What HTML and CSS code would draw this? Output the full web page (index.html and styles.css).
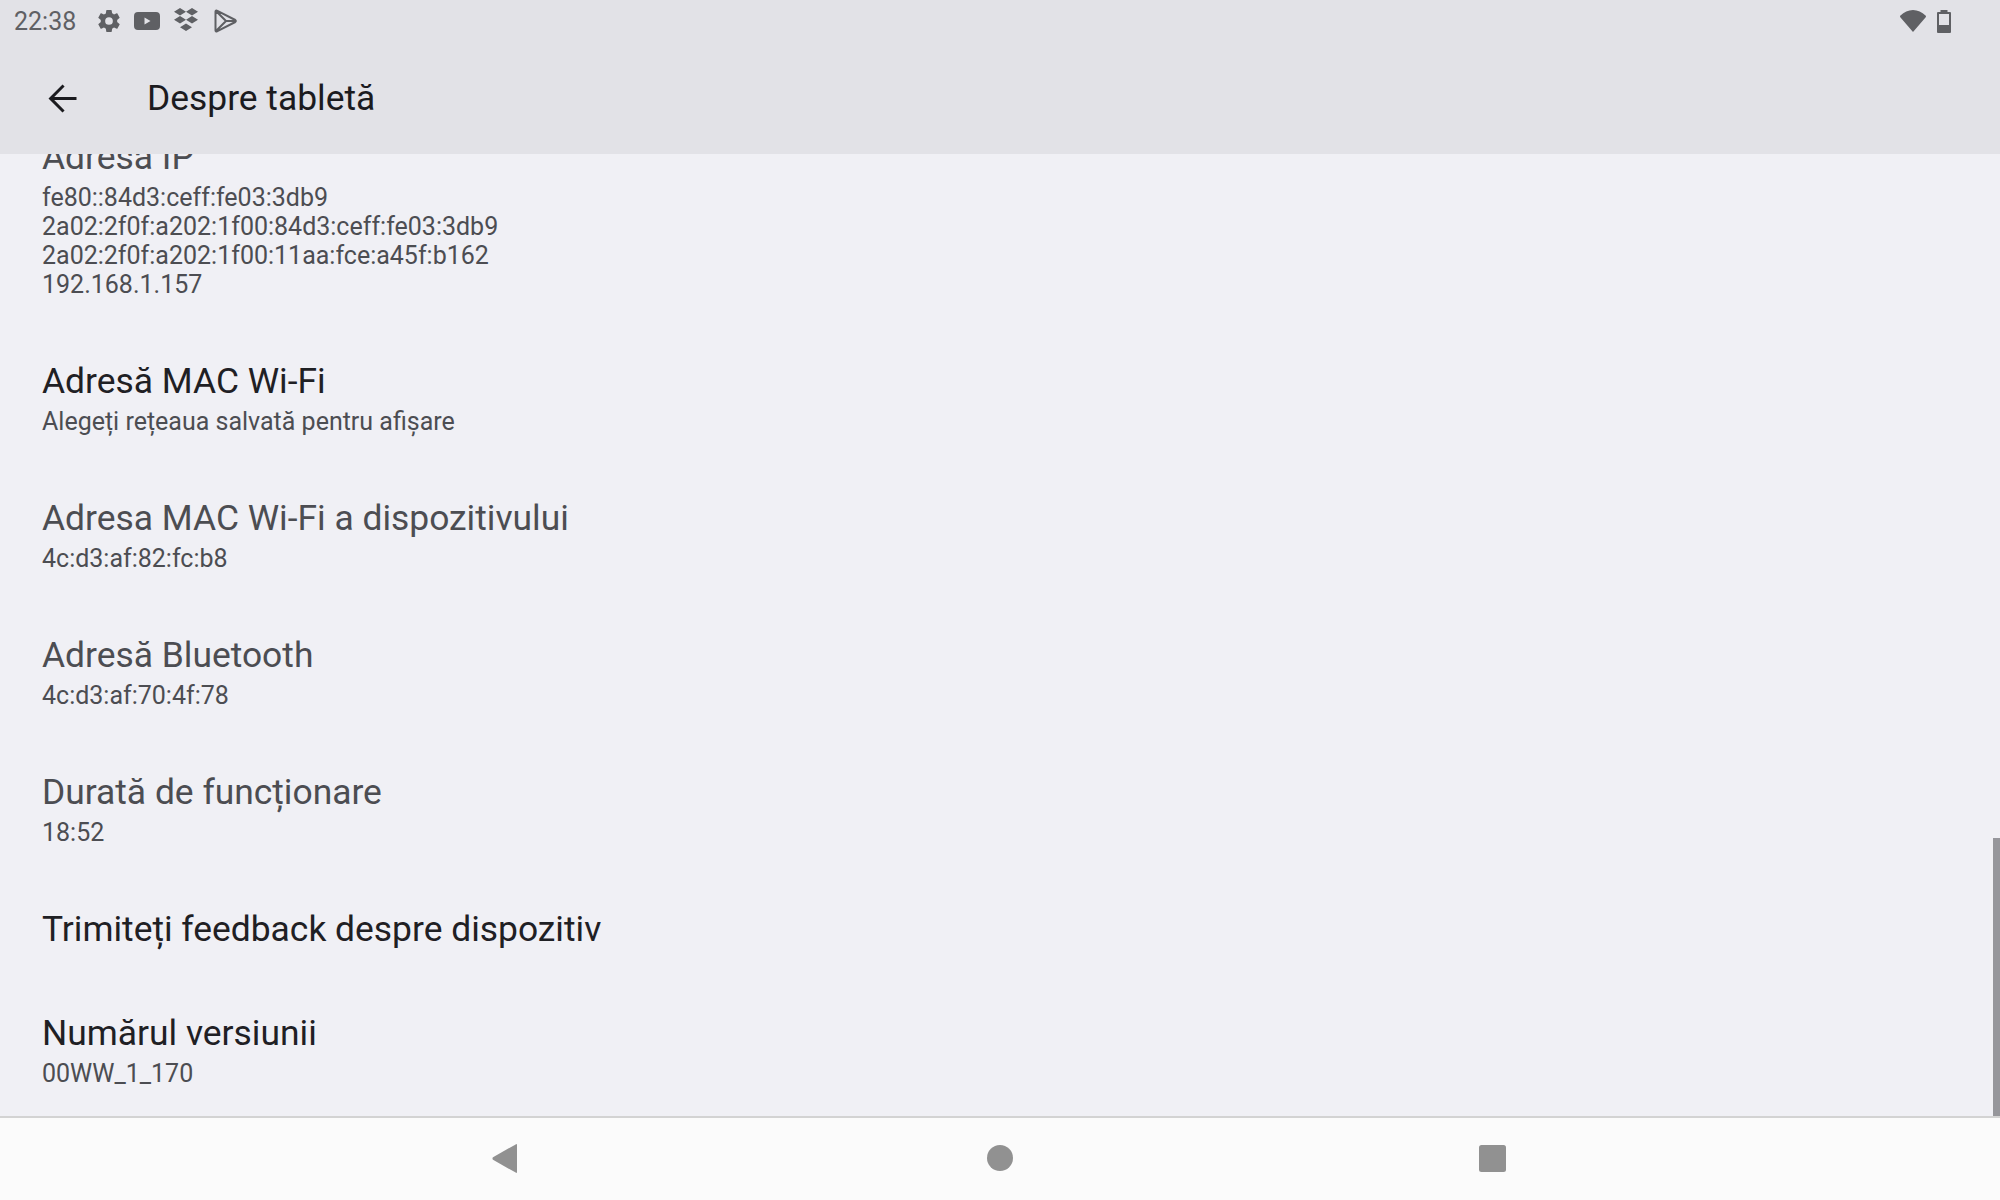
FILE: index.html
```html
<!DOCTYPE html>
<html lang="ro">
    <head>
        <title>Despre tabletă</title>
        <link rel="stylesheet" href="styles.css">
    </head>
    <body>
        <div class="screen">
            <header class="top_area">
                <div class="status_bar">
                    <span class="clock">22:38</span>
                    <div class="notif_icons">
                        <svg class="gear" viewBox="2 2 20 20"><path d="M19.4 13c.04-.32.06-.66.06-1s-.02-.68-.06-1l2.1-1.65c.19-.15.24-.42.12-.64l-2-3.46c-.12-.22-.38-.3-.6-.22l-2.5 1c-.52-.4-1.08-.73-1.7-.98l-.37-2.65A.49.49 0 0 0 14 2h-4c-.25 0-.46.18-.49.42l-.38 2.65c-.61.25-1.17.59-1.69.98l-2.49-1c-.23-.09-.49 0-.61.22l-2 3.46c-.13.22-.07.49.12.64L4.57 11c-.04.32-.07.66-.07 1s.03.68.07 1l-2.11 1.65c-.19.15-.24.42-.12.64l2 3.46c.12.22.38.3.61.22l2.49-1c.52.4 1.08.73 1.69.98l.38 2.65c.03.24.24.42.49.42h4c.25 0 .46-.18.49-.42l.37-2.65c.62-.25 1.18-.59 1.7-.98l2.5 1c.22.09.48 0 .6-.22l2-3.46c.12-.22.07-.49-.12-.64L19.4 13zM12 15.500a3.500 3.500 0 1 1 0-7 3.500 3.500 0 0 1 0 7z"/></svg>
                        <svg class="youtube" viewBox="0 0 26 18"><path fill-rule="evenodd" d="M4 0h18a4 4 0 0 1 4 4v10a4 4 0 0 1-4 4H4a4 4 0 0 1-4-4V4a4 4 0 0 1 4-4zm6.500 5.500v7L16.500 9z"/></svg>
                        <svg class="dropbox" viewBox="0 0 26 23"><path d="M7 0l6 3.800-6 3.800-6-3.800zM19 0l6 3.800-6 3.800-6-3.800zM7 8l6 3.800-6 3.800-6-3.800zM19 8l6 3.800-6 3.800-6-3.800zM13 15.400l6 3.800-6 3.800-6-3.800z"/></svg>
                        <svg class="play_store" viewBox="0 0 23 24"><path d="M1.500 2.500v19c0 .8.800 1.200 1.400.800L21.300 13c.7-.4.700-1.600 0-2L2.900 1.700c-.6-.4-1.400 0-1.400.800zM2.200 2.200L12 12 2.200 21.800M12 12h9.500" fill="none" stroke="#5f6064" stroke-width="2" stroke-linejoin="round"/></svg>
                    </div>
                    <div class="sys_icons">
                        <svg class="wifi" viewBox="0 0 26 22"><path d="M13 22L.3 7.200C-.2 6.600-.1 6 .5 5.500 4 2.300 8.300 0 13 0s9 2.300 12.500 5.500c.6.500.7 1.100.2 1.700z"/></svg>
                        <svg class="battery" viewBox="0 0 14 23"><path fill-rule="evenodd" d="M3.500 0h7v2H13a1 1 0 0 1 1 1v19a1 1 0 0 1-1 1H1a1 1 0 0 1-1-1V3a1 1 0 0 1 1-1h2.500zM2 4v17h10V4z"/><rect x="2" y="15" width="10" height="6"/></svg>
                    </div>
                </div>
                <div class="app_bar">
                    <svg class="back_arrow" viewBox="0 0 30 30"><path d="M27 13.700H7.900l8.900-8.900L15 3 3 15l12 12 1.800-1.800-8.900-8.900H27z"/></svg>
                    <h1 class="page_title">Despre tabletă</h1>
                </div>
            </header>

            <main class="settings">
                <div class="pref_list">
                    <div class="pref">
                        <div class="pref_title muted">Adresa IP</div>
                        <div class="pref_summary">fe80::84d3:ceff:fe03:3db9<br>2a02:2f0f:a202:1f00:84d3:ceff:fe03:3db9<br>2a02:2f0f:a202:1f00:11aa:fce:a45f:b162<br>192.168.1.157</div>
                    </div>
                    <div class="pref">
                        <div class="pref_title">Adresă MAC Wi-Fi</div>
                        <div class="pref_summary">Alegeți rețeaua salvată pentru afișare</div>
                    </div>
                    <div class="pref">
                        <div class="pref_title muted">Adresa MAC Wi-Fi a dispozitivului</div>
                        <div class="pref_summary">4c:d3:af:82:fc:b8</div>
                    </div>
                    <div class="pref">
                        <div class="pref_title muted">Adresă Bluetooth</div>
                        <div class="pref_summary">4c:d3:af:70:4f:78</div>
                    </div>
                    <div class="pref">
                        <div class="pref_title muted">Durată de funcționare</div>
                        <div class="pref_summary">18:52</div>
                    </div>
                    <div class="pref">
                        <div class="pref_title">Trimiteți feedback despre dispozitiv</div>
                    </div>
                    <div class="pref">
                        <div class="pref_title">Numărul versiunii</div>
                        <div class="pref_summary">00WW_1_170</div>
                    </div>
                </div>
                <div class="scroll_thumb"></div>
            </main>

            <nav class="nav_bar">
                <svg class="nav_back" viewBox="0 0 25 29"><path d="M25 1v27c0 .8-.7 1.200-1.300.6L1 15.800c-.7-.7-.7-1.900 0-2.600L23.700.4C24.300-.2 25 .2 25 1z"/></svg>
                <svg class="nav_home" viewBox="0 0 26 26"><circle cx="13" cy="13" r="13"/></svg>
                <svg class="nav_recent" viewBox="0 0 27 27"><rect width="27" height="27" rx="2.500"/></svg>
            </nav>
        </div>
    </body>
</html>
```

FILE: styles.css
```css
html, body {
    margin: 0;
    padding: 0;
}

body {
    font-family: Roboto, "Noto Sans", sans-serif;
}

.screen {
    width: 2000px;
    height: 1200px;
    display: flex;
    flex-direction: column;
    overflow: hidden;
    background-color: #f0f0f5;
}

.top_area {
    height: 154px;
    flex: none;
    background-color: #e2e2e7;
    position: relative;
    z-index: 1;
}

.status_bar {
    height: 42px;
    display: flex;
    align-items: center;
    padding: 0 49px 0 14px;
    color: #5f6064;
}

.clock {
    font-size: 25px;
    width: 84px;
}

.notif_icons {
    display: flex;
    align-items: center;
    fill: #5f6064;
}

.gear {
    width: 22px;
    height: 22px;
}

.youtube {
    width: 26px;
    height: 18px;
    margin-left: 14px;
}

.dropbox {
    width: 26px;
    height: 23px;
    margin: -3px 0 0 13px;
}

.play_store {
    width: 23px;
    height: 24px;
    margin-left: 15px;
}

.sys_icons {
    margin-left: auto;
    display: flex;
    align-items: center;
    gap: 11px;
    fill: #5f6064;
}

.wifi {
    width: 26px;
    height: 22px;
}

.battery {
    width: 14px;
    height: 23px;
}

.app_bar {
    height: 112px;
    display: flex;
    align-items: center;
    padding-left: 45px;
}

.back_arrow {
    width: 35px;
    height: 35px;
    fill: #1b1b1f;
}

.page_title {
    margin: 0 0 0 67px;
    font-size: 35.4px;
    font-weight: 400;
    color: #1b1b1f;
}

.settings {
    flex: 1;
    min-height: 0;
    position: relative;
    overflow: hidden;
}

.pref_list {
    position: absolute;
    left: 0;
    right: 0;
    bottom: 0;
}

.pref {
    padding: 32px 42px 28px;
}

.pref_title {
    font-size: 35.4px;
    line-height: 44px;
    color: #1f2024;
}

.pref_title.muted {
    color: #4c4d52;
}

.pref_summary {
    margin-top: 4px;
    font-size: 25px;
    line-height: 29px;
    color: #4c4d52;
}

.scroll_thumb {
    position: absolute;
    right: 0;
    bottom: 0;
    width: 7px;
    height: 278px;
    background-color: #96969b;
}

.nav_bar {
    height: 80px;
    padding-bottom: 2px;
    flex: none;
    border-top: 2px solid #d3d3d3;
    background-color: #fbfbfb;
    display: grid;
    grid-template-columns: 1fr 26px 1fr;
    column-gap: 466px;
    align-items: center;
    fill: #919191;
}

.nav_back {
    width: 25px;
    height: 29px;
    justify-self: end;
    margin-right: 4px;
}

.nav_home {
    width: 26px;
    height: 26px;
}

.nav_recent {
    width: 27px;
    height: 27px;
}
```
